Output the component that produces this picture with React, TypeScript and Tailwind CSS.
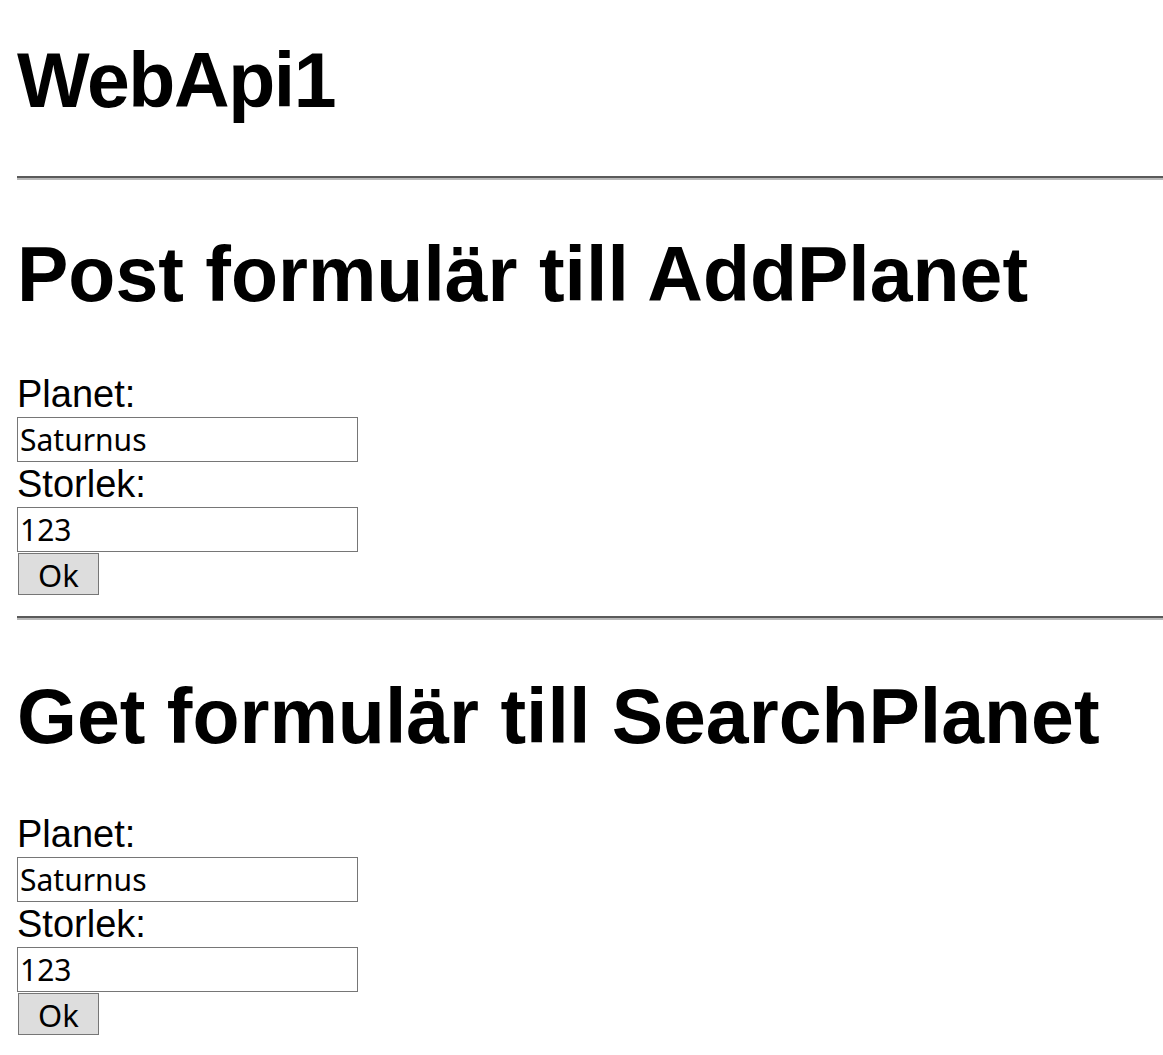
import React from 'react';

interface PlanetFormProps {
  title: string;
  first?: boolean;
}

const PlanetForm: React.FC<PlanetFormProps> = ({ title, first = false }) => {
  return (
    <section>
      <h1 className={`${first ? 'mt-[50px]' : 'mt-[52px]'} text-[77px] font-bold leading-[88px] whitespace-nowrap`}>
        {title}
      </h1>

      {/* Form */}
      <form className={`${first ? 'mt-[54px]' : 'mt-[52px]'} flex flex-col items-start`} onSubmit={(e) => e.preventDefault()}>
        <label className="block text-[38px] leading-[45px]">Planet:</label>
        <input
          type="text"
          defaultValue="Saturnus"
          className="block w-[341px] h-[45px] border border-[#767676] bg-white px-[2px] text-[30px] font-['Noto_Sans',sans-serif] text-black outline-none"
        />
        <label className="block text-[38px] leading-[45px]">Storlek:</label>
        <input
          type="text"
          defaultValue="123"
          className="block w-[341px] h-[45px] border border-[#767676] bg-white px-[2px] text-[30px] font-['Noto_Sans',sans-serif] text-black outline-none"
        />
        <button
          type="submit"
          className="ml-[1px] mt-[1px] w-[81px] h-[42px] border border-[#767676] bg-[#dddddd] pt-[3px] text-[31px] leading-none font-['Noto_Sans',sans-serif] text-black"
        >
          Ok
        </button>
      </form>
    </section>
  );
};

const Rule: React.FC<{ className?: string }> = ({ className = '' }) => (
  <hr className={`h-0 border-0 border-t-2 border-b-2 border-t-[#5a5a5a] border-b-[#b9b9b9] ${className}`} />
);

const App: React.FC = () => {
  return (
    <div className="min-h-screen bg-white pl-[17px] pb-[20px] text-black font-['Liberation_Sans',Arial,sans-serif]">
      <h1 className="pt-[36px] text-[77px] font-bold leading-[88px] tracking-[-1.4px]">WebApi1</h1>
      <Rule className="mt-[52px]" />
      <PlanetForm title="Post formulär till AddPlanet" first />
      <Rule className="mt-[21px]" />
      <PlanetForm title="Get formulär till SearchPlanet" />
    </div>
  );
};

export default App;
